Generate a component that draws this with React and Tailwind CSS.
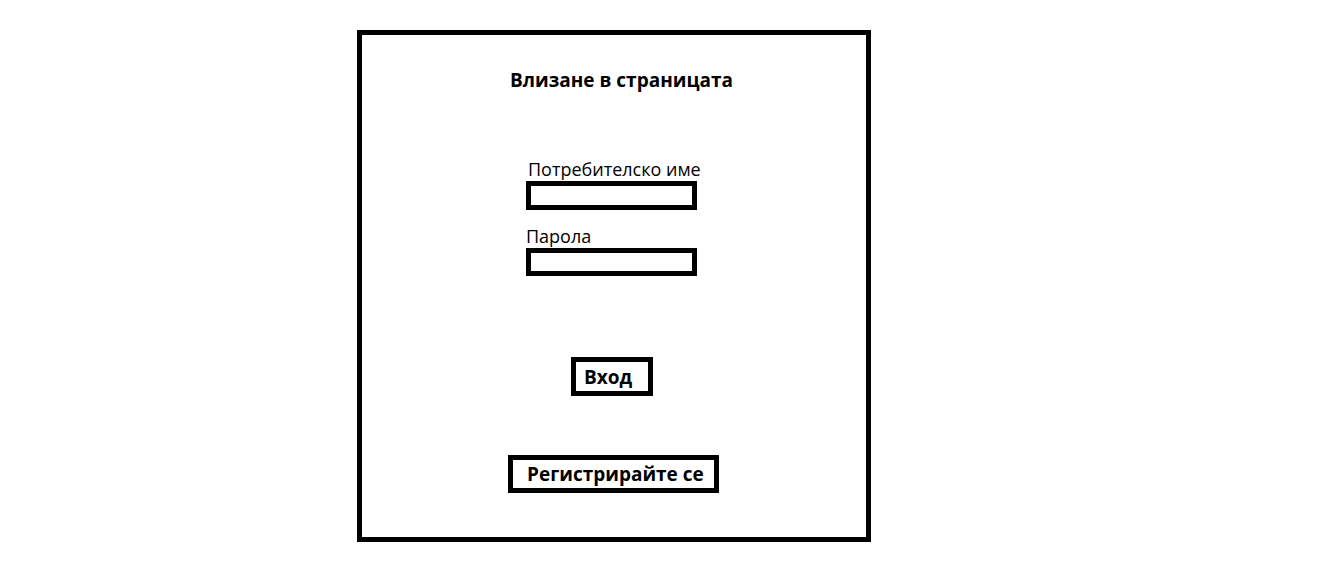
export default function App() {
  return (
    <div
      className="w-[1343px] h-[571px] bg-white pl-[357px] pt-[30px] text-black"
      style={{ fontFamily: '"Open Sans", "Noto Sans", sans-serif' }}
    >
      <div className="w-[514px] h-[512px] border-[5px] border-black flex flex-col items-start">
        <h1 className="ml-[148px] mt-[33px] text-[19px] font-bold leading-[24px] whitespace-nowrap">
          Влизане в страницата
        </h1>
        <div className="ml-[164px] mt-[66px] w-[171px]">
          <label className="block pl-[2px] h-[23px] text-[18px] leading-[22px] whitespace-nowrap">
            Потребителско име
          </label>
          <div className="h-[29px] border-[5px] border-black" />
          <label className="block mt-[15px] h-[23px] text-[18px] leading-[22px] whitespace-nowrap">
            Парола
          </label>
          <div className="h-[28px] border-[5px] border-black" />
        </div>
        <button className="ml-[209px] mt-[81px] w-[82px] h-[39px] border-[5px] border-black text-left pl-[8px] text-[19px] font-bold leading-[26px]">
          Вход
        </button>
        <button className="ml-[146px] mt-[59px] w-[211px] h-[38px] border-[5px] border-black text-left pl-[14px] text-[19px] font-bold leading-[26px] whitespace-nowrap">
          Регистрирайте се
        </button>
      </div>
    </div>
  );
}
